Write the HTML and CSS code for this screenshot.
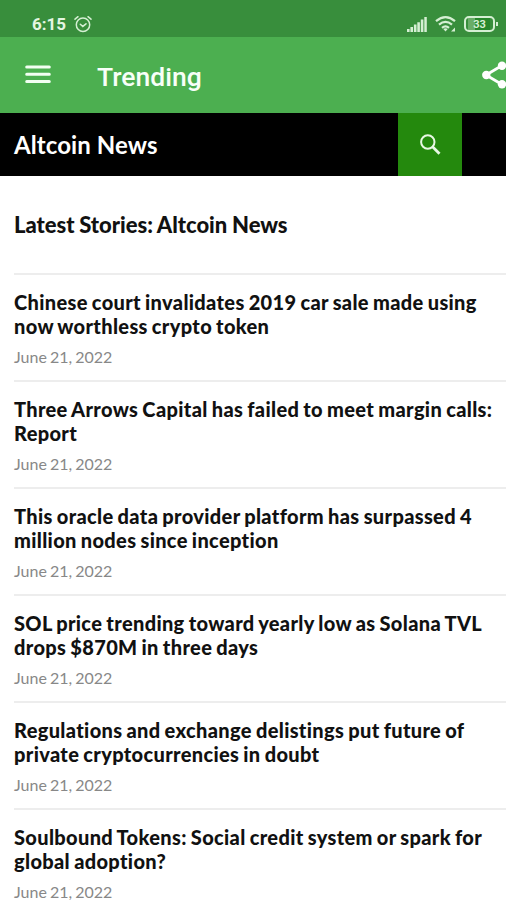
FILE: index.html
```html
<!DOCTYPE html>
<html lang="en">
<head>
<meta charset="utf-8">
<title>Altcoin News</title>
<link rel="stylesheet" href="styles.css">
</head>
<body>
<div class="status-bar">
  <span class="clock">6:15</span>
  <svg class="alarm" width="18" height="18" viewBox="0 0 18 18"><g fill="none" stroke="#d5efd3" stroke-width="1.5" stroke-linecap="round"><circle cx="9" cy="9.8" r="6.7"/><path d="M1 4.2 4 1.7M17 4.2 14 1.7M6.3 9.2 8.8 11.4 12 8.8"/></g></svg>
  <svg class="signal" width="20" height="15" viewBox="0 0 20 15"><path fill="#d5efd3" d="M0 12h2.600v3H0zM3.400 10h2.600v5H3.400zM6.900 7.600h2.600V15H6.900zM10.300 5.200h2.600V15h-2.600zM13.800 2.600h2.600V15h-2.600zM17.300 0h2.500v15h-2.500z"/></svg>
  <svg class="wifi" width="21" height="16" viewBox="0 0 21 16"><g fill="none" stroke="#d5efd3" stroke-width="2.2"><path d="M1 5.200Q10.500-2.800 20 5.200M4 8.600Q10.500 3 17 8.600M7 11.800Q10.500 8.800 14 11.800"/></g><path fill="#d5efd3" d="m8.300 12.900 2.200 2.500 2.200-2.500q-2.200-1.400-4.400 0zM16 15.500h4v-4z"/></svg>
  <div class="battery"><span>33</span></div>
</div>
<header class="app-bar">
  <svg class="menu" width="26" height="19" viewBox="0 0 26 19"><path stroke="#f2fff2" stroke-width="3" stroke-linecap="round" d="M1.700 2H24.300M1.700 9.300H24.300M1.700 16.500H24.300"/></svg>
  <h1>Trending</h1>
  <svg class="share" width="24" height="28" viewBox="0 0 24 28"><path d="M20 4.500 4 14 20 23.500" fill="none" stroke="#fff" stroke-width="2.800"/><g fill="#fff"><circle cx="4.300" cy="14" r="4.200"/><circle cx="20" cy="4.700" r="4.200"/><circle cx="20" cy="23.300" r="4.200"/></g></svg>
</header>
<div class="site-bar">
  <h2>Altcoin News</h2>
  <div class="search"><svg width="22" height="22" viewBox="0 0 22 22"><g fill="none" stroke="#e8f8e4"><circle cx="8.800" cy="8" r="6.700" stroke-width="2"/><path d="m13.300 12.500 7.200 7.200" stroke-width="2.800"/></g></svg></div>
</div>
<main>
  <h3 class="heading">Latest Stories: Altcoin News</h3>
  <article><h4>Chinese court invalidates 2019 car sale made using<br>now worthless crypto token</h4><time>June 21, 2022</time></article>
  <article><h4>Three Arrows Capital has failed to meet margin calls:<br>Report</h4><time>June 21, 2022</time></article>
  <article><h4>This oracle data provider platform has surpassed 4<br>million nodes since inception</h4><time>June 21, 2022</time></article>
  <article><h4>SOL price trending toward yearly low as Solana TVL<br>drops $870M in three days</h4><time>June 21, 2022</time></article>
  <article><h4>Regulations and exchange delistings put future of<br>private cryptocurrencies in doubt</h4><time>June 21, 2022</time></article>
  <article><h4>Soulbound Tokens: Social credit system or spark for<br>global adoption?</h4><time>June 21, 2022</time></article>
</main>
</body>
</html>
```
FILE: styles.css
```css
* { box-sizing: border-box; }
html, body { height: 900px; overflow: hidden; }
body { margin: 0; background: #fff; font-family: Lato, sans-serif; color: #111; font-variant-ligatures: none; }
h1, h2, h3, h4 { margin: 0; font-weight: 700; white-space: nowrap; }
svg { display: block; flex: none; }
.status-bar { display: flex; align-items: center; height: 37px; padding: 11px 8px 0 32px; background: #388e3c; }
.clock { width: 42px; font: 700 17px/20px Roboto, sans-serif; color: #e4f6e2; }
.signal { margin-left: auto; }
.wifi { margin-left: 8px; }
.battery { position: relative; width: 31px; height: 16px; margin: 0 3px 0 8px; border: 2px solid #d5efd3; border-radius: 5px; background: linear-gradient(90deg, #388e3c 2px, #69ad68 2px, #69ad68 9px, #27862b 9px, #27862b 24px, #388e3c 24px); }
.battery::after { content: ""; position: absolute; right: -5px; top: 4px; width: 2px; height: 4px; background: #d5efd3; }
.battery span { display: block; text-align: center; font: 700 11px/13px Roboto, sans-serif; color: #d5efd3; }
.app-bar { display: flex; align-items: center; height: 76px; padding-left: 25px; background: #4caf50; }
.app-bar h1 { margin: 3px 0 0 46px; font: 500 26.500px/32px Roboto, sans-serif; color: #f8fff8; }
.menu { margin-top: -2px; }
.share { margin: 0 0 0 auto; }
.site-bar { display: flex; align-items: center; height: 63px; padding-left: 14px; background: #000; }
.site-bar h2 { font-size: 24px; line-height: 30px; letter-spacing: .1px; color: #fff; }
.search { display: flex; align-items: center; justify-content: center; width: 64px; height: 63px; margin: 0 44px 0 auto; background: #24890d; }
main { padding-left: 14px; }
.heading { height: 97px; padding-top: 35px; font-size: 22px; line-height: 28px; font-weight: 900; letter-spacing: -.02px; word-spacing: -.5px; }
article { height: 107.1px; padding-top: 15px; border-top: 2px solid #ededed; }
h4 { font-size: 20px; line-height: 24px; font-weight: 900; letter-spacing: .34px; word-spacing: -1px; }
time { display: block; margin-top: 8px; font-size: 16px; line-height: 22px; word-spacing: -1px; color: #888; }
```
